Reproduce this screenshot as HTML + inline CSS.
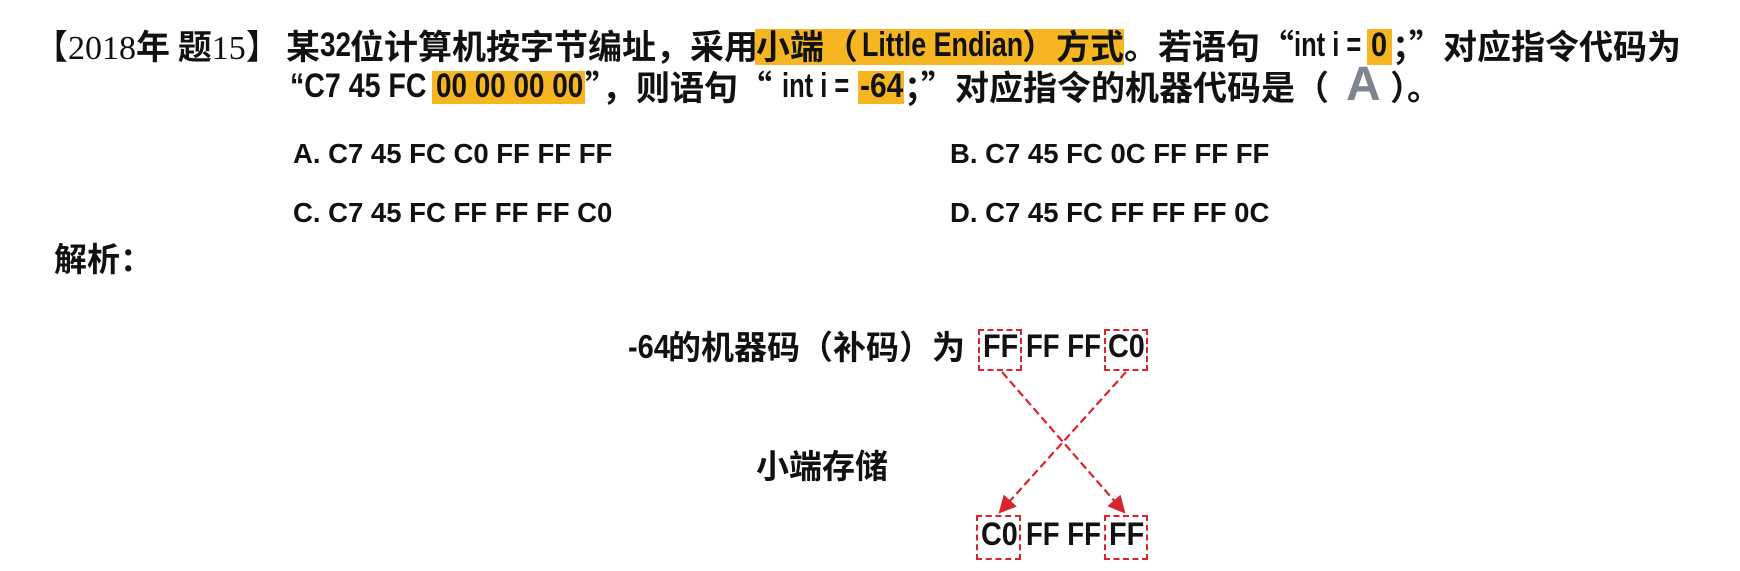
<!DOCTYPE html>
<html><head><meta charset="utf-8"><style>
html,body{margin:0;padding:0;background:#fff;width:1740px;height:571px;overflow:hidden;position:relative}
.t{position:absolute;white-space:nowrap;font-family:"Liberation Sans","Noto Sans CJK SC",sans-serif;font-weight:bold;color:#111;line-height:1}
.c{font-family:"Noto Sans CJK SC",sans-serif;font-weight:bold}
.s{font-family:"Liberation Serif","Noto Serif CJK SC",serif;font-weight:normal}
.n{transform-origin:0 0}
.hl{position:absolute;background:#f6b622}
.box{position:absolute;border:2px dashed #d9232e;box-sizing:border-box}
.l1{top:28px;font-size:34px}
.l2{top:69px;font-size:34px}
</style></head><body>
<div class="hl" style="left:755px;top:29px;width:369px;height:36px"></div>
<div class="hl" style="left:1367px;top:29px;width:25px;height:36px"></div>
<div class="hl" style="left:432px;top:71px;width:153px;height:33px"></div>
<div class="hl" style="left:858px;top:71px;width:46px;height:33px"></div>

<div class="t l1" style="left:34px"><span class="c" style="font-weight:normal">【</span><span class="s">2018</span><span class="c">年 题</span><span class="s">15</span><span class="c" style="font-weight:normal">】</span></div>
<div class="t l1 c" style="left:286px">某</div>
<div class="t l1 n" style="left:320px;transform:scaleX(.82)">32</div>
<div class="t l1 c" style="left:350px">位计算机按字节编址，采用</div>
<div class="t l1 c" style="left:756px">小端（</div>
<div class="t l1 n" style="left:862px;transform:scaleX(.79)">Little Endian</div>
<div class="t l1 c" style="left:1022px">）方式</div>
<div class="t l1 c" style="left:1124px">。若语句“</div>
<div class="t l1 n" style="left:1294px;transform:scaleX(.75)">int i =</div>
<div class="t l1 n" style="left:1371px;transform:scaleX(.85)">0</div>
<div class="t l1 c" style="left:1392px">；”对应指令代码为</div>

<div class="t l2 n" style="left:290px;transform:scaleX(.84)">“C7 45 FC</div>
<div class="t l2 n" style="left:436px;transform:scaleX(.82)">00 00 00 00</div>
<div class="t l2 c" style="left:585px">”，则语句“</div>
<div class="t l2 n" style="left:782px;transform:scaleX(.75)">int i =</div>
<div class="t l2 n" style="left:860px;transform:scaleX(.88)">-64</div>
<div class="t l2 c" style="left:904px">；”对应指令的机器代码是（</div>
<div class="t" style="left:1346px;top:61px;font-size:48px;color:#7e8491">A</div>
<div class="t l2 c" style="left:1390px">）。</div>

<div class="t" style="left:293px;top:140px;font-size:27.5px">A. C7 45 FC C0 FF FF FF</div>
<div class="t" style="left:950px;top:140px;font-size:27.5px">B. C7 45 FC 0C FF FF FF</div>
<div class="t" style="left:293px;top:199px;font-size:27.5px">C. C7 45 FC FF FF FF C0</div>
<div class="t" style="left:950px;top:199px;font-size:27.5px">D. C7 45 FC FF FF FF 0C</div>
<div class="t c" style="left:54px;top:241px;font-size:33px">解析：</div>

<div class="t n" style="left:628px;top:330px;font-size:33px;transform:scaleX(.88)">-64</div>
<div class="t c" style="left:668px;top:329px;font-size:33px">的机器码（补码）为</div>
<div class="t n" style="left:983px;top:330px;font-size:32px;transform:scaleX(.9)">FF</div>
<div class="t n" style="left:1026px;top:330px;font-size:32px;transform:scaleX(.86)">FF FF</div>
<div class="t n" style="left:1108px;top:330px;font-size:32px;transform:scaleX(.9)">C0</div>
<div class="box" style="left:978px;top:329px;width:44px;height:42px"></div>
<div class="box" style="left:1104px;top:329px;width:44px;height:42px"></div>
<div class="t c" style="left:756px;top:448px;font-size:33px">小端存储</div>
<div class="t n" style="left:981px;top:518px;font-size:32px;transform:scaleX(.9)">C0</div>
<div class="t n" style="left:1026px;top:518px;font-size:32px;transform:scaleX(.86)">FF FF</div>
<div class="t n" style="left:1109px;top:518px;font-size:32px;transform:scaleX(.9)">FF</div>
<div class="box" style="left:976px;top:515px;width:45px;height:45px"></div>
<div class="box" style="left:1104px;top:515px;width:44px;height:45px"></div>
<svg style="position:absolute;left:0;top:0" width="1740" height="571">
<defs><marker id="m" markerWidth="8" markerHeight="8" refX="7" refY="4" orient="auto"><path d="M0,0 L8,4 L0,8 Z" fill="#d9232e"/></marker></defs>
<line x1="1002" y1="372" x2="1124" y2="512" stroke="#d9232e" stroke-width="2.2" stroke-dasharray="8,4" marker-end="url(#m)"/>
<line x1="1126" y1="372" x2="1000" y2="512" stroke="#d9232e" stroke-width="2.2" stroke-dasharray="8,4" marker-end="url(#m)"/>
</svg>
</body></html>
